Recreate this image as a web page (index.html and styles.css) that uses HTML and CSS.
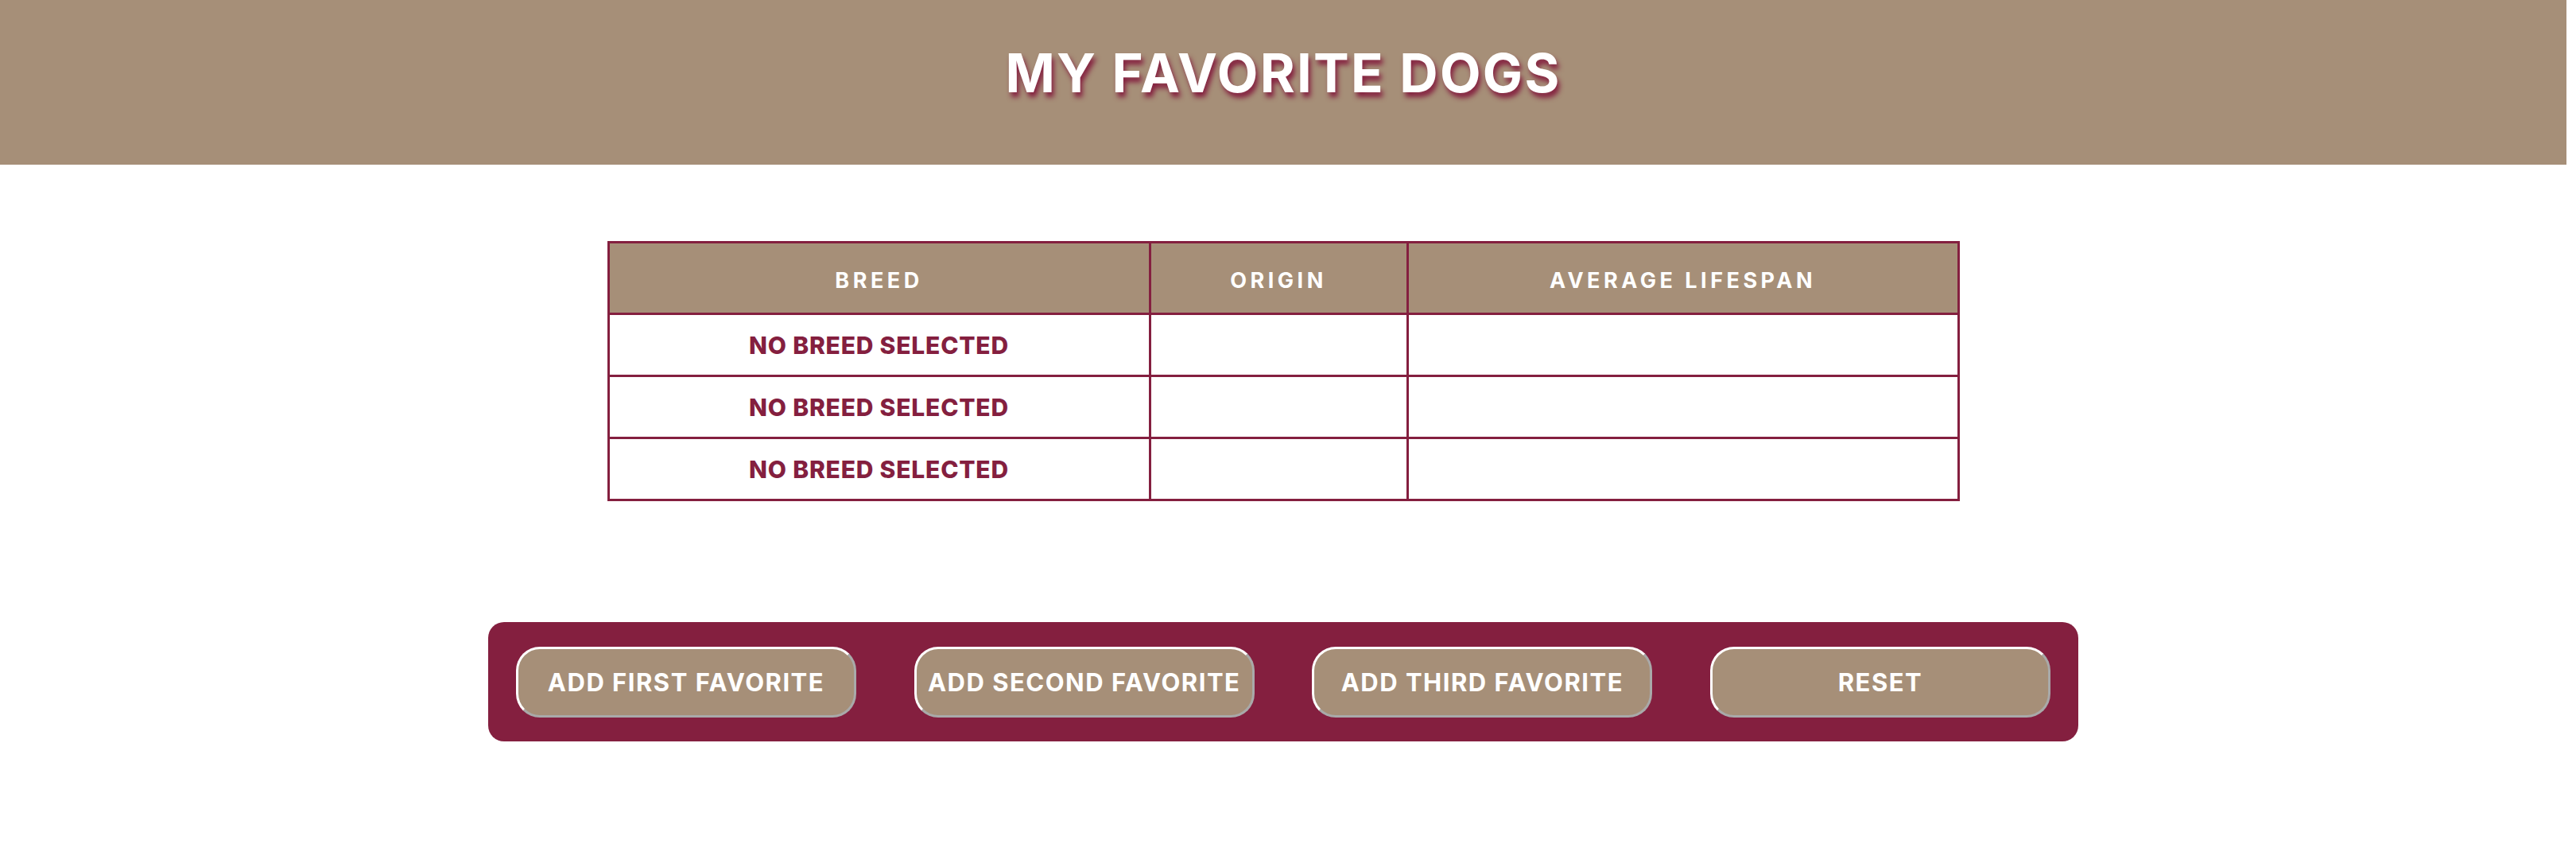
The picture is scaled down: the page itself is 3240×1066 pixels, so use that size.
FILE: index.html
```html
<!DOCTYPE html>
<html lang="en">
<head>
<meta charset="utf-8">
<title>My Favorite Dogs</title>
<link rel="stylesheet" href="styles.css">
</head>
<body>
<div class="page">
  <header class="banner">
    <h1 class="title">MY FAVORITE DOGS</h1>
  </header>
  <main class="content">
    <table class="dogs">
      <colgroup>
        <col class="c-breed">
        <col class="c-origin">
        <col class="c-life">
      </colgroup>
      <thead>
        <tr><th>BREED</th><th>ORIGIN</th><th>AVERAGE LIFESPAN</th></tr>
      </thead>
      <tbody>
        <tr><td class="breed">NO BREED SELECTED</td><td></td><td></td></tr>
        <tr><td class="breed">NO BREED SELECTED</td><td></td><td></td></tr>
        <tr><td class="breed">NO BREED SELECTED</td><td></td><td></td></tr>
      </tbody>
    </table>
    <div class="controls">
      <button class="btn">ADD FIRST FAVORITE</button>
      <button class="btn">ADD SECOND FAVORITE</button>
      <button class="btn">ADD THIRD FAVORITE</button>
      <button class="btn">RESET</button>
    </div>
  </main>
</div>
</body>
</html>
```

FILE: styles.css
```css
html, body {
  margin: 0;
  padding: 0;
  background: #ffffff;
}

body {
  font-family: "Inter", "Liberation Sans", sans-serif;
}

.page {
  width: 3228px;
}

.banner {
  height: 207px;
  background: #a68f78;
  display: flex;
  justify-content: center;
  align-items: flex-start;
}

.title {
  margin: 54px 0 0;
  font-size: 67px;
  line-height: 76px;
  font-weight: 700;
  color: #ffffff;
  letter-spacing: 2.3px;
  text-shadow: 3px 6px 6px #841f3f;
}

.content {
  display: flex;
  flex-direction: column;
  align-items: center;
  padding-top: 96px;
}

.dogs {
  width: 1698px;
  table-layout: fixed;
  border-collapse: collapse;
  border: 3px solid #841f3f;
}

.c-breed { width: 681px; }
.c-origin { width: 324px; }
.c-life { width: 693px; }

.dogs th,
.dogs td {
  border: 3px solid #841f3f;
  text-align: center;
  padding: 0;
}

.dogs th {
  height: 90px;
  box-sizing: border-box;
  padding-top: 6px;
  background: #a68f78;
  color: #ffffff;
  font-size: 27px;
  font-weight: 700;
  letter-spacing: 4.5px;
}

.dogs td {
  height: 75px;
  background: #ffffff;
}

.dogs td.breed {
  color: #841f3f;
  font-size: 30px;
  font-weight: 800;
  letter-spacing: 0.8px;
}

.controls {
  margin-top: 152px;
  width: 2000px;
  height: 150px;
  box-sizing: border-box;
  padding: 0 35px;
  background: #841f3f;
  border-radius: 20px;
  display: flex;
  justify-content: space-between;
  align-items: center;
}

.btn {
  width: 428px;
  height: 89px;
  box-sizing: border-box;
  background: #a68f78;
  color: #ffffff;
  font-family: "Inter", "Liberation Sans", sans-serif;
  font-size: 31px;
  font-weight: 700;
  letter-spacing: 1.5px;
  border-radius: 30px;
  border: 3px solid #ffffff;
  border-right-color: #a9a9a9;
  border-bottom-color: #a9a9a9;
  padding: 0;
  cursor: pointer;
}
```
